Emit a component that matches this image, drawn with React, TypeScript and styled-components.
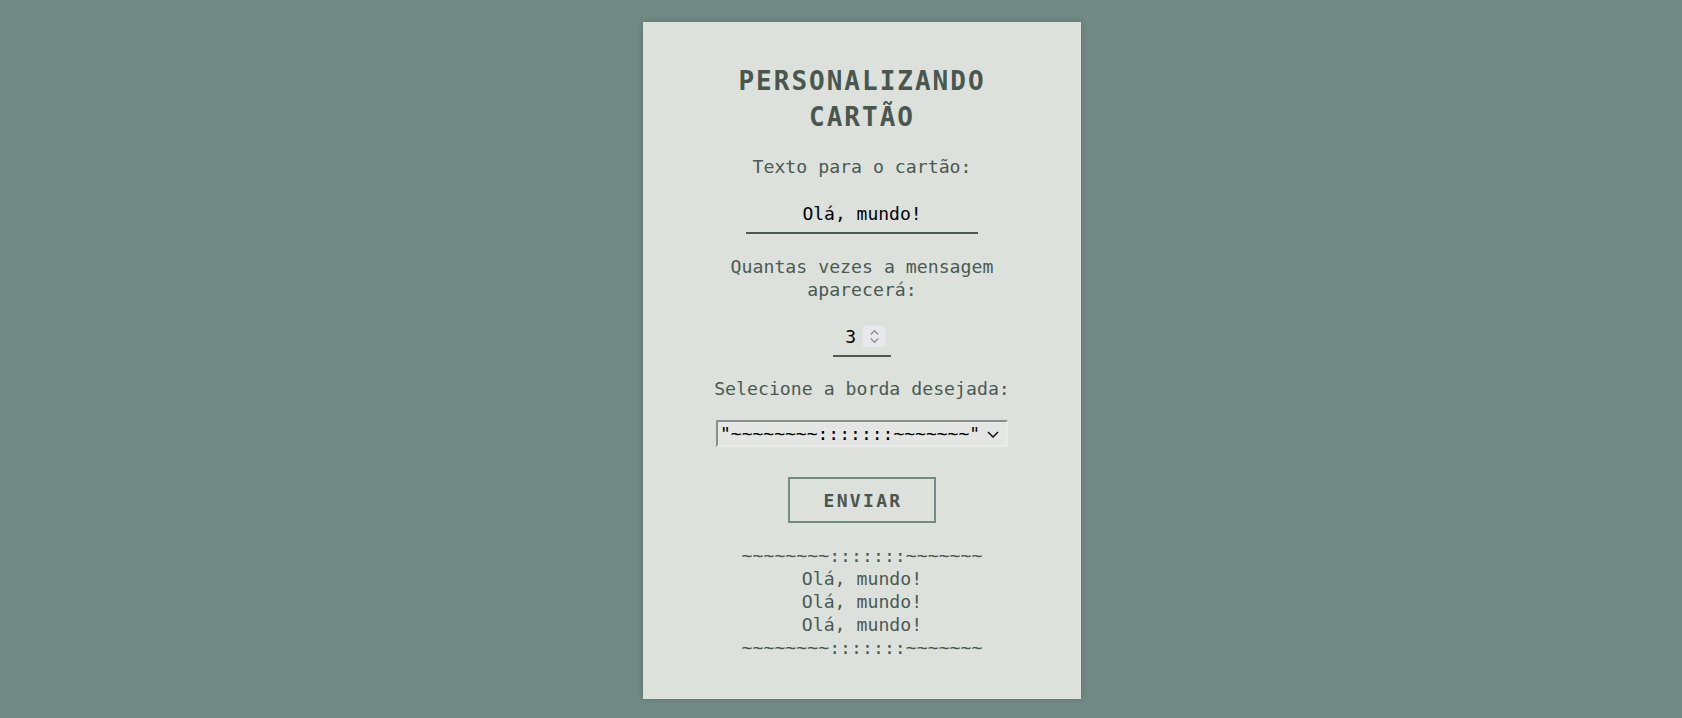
import React, { useState } from "react";
import styled, { createGlobalStyle } from "styled-components";

const GlobalStyle = createGlobalStyle`
  html, body {
    margin: 0;
    padding: 0;
    background: #728a85;
    min-height: 100%;
  }
  body {
    font-family: "DejaVu Sans Mono", "Liberation Mono", monospace;
  }
`;

const TEXT = "#4b5a52";
const MONO = `"DejaVu Sans Mono", "Liberation Mono", monospace`;

const Page = styled.div`
  display: flex;
  justify-content: center;
  align-items: flex-start;
  padding: 22px 0 19px 42px;
  min-height: 718px;
  box-sizing: border-box;
`;

const Card = styled.form`
  width: 438px;
  box-sizing: border-box;
  background: #dce1dc;
  box-shadow: 0 0 8px rgba(0, 0, 0, 0.18);
  padding: 41px 60px 40px;
  display: flex;
  flex-direction: column;
  align-items: center;
  font-family: ${MONO};
  color: ${TEXT};
`;

const Title = styled.h1`
  margin: 0;
  font-size: 26px;
  line-height: 36px;
  font-weight: bold;
  letter-spacing: 2px;
  text-align: center;
  color: #4a574f;
`;

const Label = styled.label<{ $top?: number }>`
  display: block;
  margin-top: ${(p) => p.$top ?? 20}px;
  font-size: 18.2px;
  line-height: 23px;
  text-align: center;
`;

const TextInput = styled.input`
  margin-top: 20px;
  width: 232px;
  height: 36px;
  box-sizing: border-box;
  padding: 4px 0 7px;
  border: none;
  border-bottom: 2px solid #4b5a52;
  background: transparent;
  font-family: ${MONO};
  font-size: 18px;
  line-height: 23px;
  color: #000;
  text-align: center;
  outline: none;
`;

const NumberField = styled.div`
  margin-top: 20px;
  width: 58px;
  height: 36px;
  box-sizing: border-box;
  padding: 4px 6px 7px 0;
  border-bottom: 2px solid #4b5a52;
  display: flex;
  align-items: center;
  gap: 7px;
`;

const NumberInput = styled.input`
  width: 23px;
  height: 23px;
  padding: 0;
  border: none;
  background: transparent;
  font-family: ${MONO};
  font-size: 18px;
  line-height: 23px;
  color: #000;
  text-align: right;
  outline: none;
  -moz-appearance: textfield;
  &::-webkit-inner-spin-button,
  &::-webkit-outer-spin-button {
    -webkit-appearance: none;
    margin: 0;
  }
`;

const Spinner = styled.span`
  width: 23px;
  height: 21px;
  background: #e9e9ed;
  display: flex;
  align-items: center;
  justify-content: center;
`;

const SelectWrap = styled.div`
  position: relative;
  margin-top: 20px;
  width: 292px;
  height: 27px;
`;

const Select = styled.select`
  appearance: none;
  -webkit-appearance: none;
  width: 100%;
  height: 100%;
  box-sizing: border-box;
  padding: 0 0 0 2px;
  border: 2px solid;
  border-color: #8c8c8c #e9ebe8 #e9ebe8 #8c8c8c;
  border-radius: 0;
  background: #e4e6e3;
  font-family: ${MONO};
  font-size: 18px;
  color: #000;
  outline: none;
`;

const Chevron = styled.svg`
  position: absolute;
  right: 9px;
  top: 11px;
  pointer-events: none;
`;

const Button = styled.button`
  margin-top: 30px;
  width: 148px;
  height: 46px;
  box-sizing: border-box;
  border: 2px solid #748b86;
  background: transparent;
  font-family: ${MONO};
  font-size: 18px;
  font-weight: bold;
  letter-spacing: 2.3px;
  color: #4a574f;
  cursor: pointer;
  padding: 0 0 0 2px;
`;

const Output = styled.div`
  margin-top: 21px;
  font-size: 18.2px;
  line-height: 23px;
  text-align: center;
  white-space: pre;
`;

const BORDER = "~~~~~~~~:::::::~~~~~~~";

export default function App() {
  const [text, setText] = useState("Olá, mundo!");
  const [times, setTimes] = useState(3);
  const [border, setBorder] = useState(BORDER);

  const lines = [border, ...Array.from({ length: times }, () => text), border];

  return (
    <>
      <GlobalStyle />
      <Page>
        <Card onSubmit={(e) => e.preventDefault()}>
          <Title>PERSONALIZANDO CARTÃO</Title>
          <Label htmlFor="texto">Texto para o cartão:</Label>
          <TextInput id="texto" value={text} onChange={(e) => setText(e.target.value)} />
          <Label htmlFor="vezes" $top={21}>
            Quantas vezes a mensagem aparecerá:
          </Label>
          <NumberField>
            <NumberInput
              id="vezes"
              type="number"
              value={times}
              onChange={(e) => setTimes(Math.max(0, Number(e.target.value) || 0))}
            />
            <Spinner>
              <svg width="11" height="17" viewBox="0 0 11 17" fill="none" stroke="#8f8f96" strokeWidth="1.4">
                <path d="M1.8 6.5 L5.5 2.8 L9.2 6.5" />
                <path d="M1.8 10.5 L5.5 14.2 L9.2 10.5" />
              </svg>
            </Spinner>
          </NumberField>
          <Label htmlFor="borda">Selecione a borda desejada:</Label>
          <SelectWrap>
            <Select id="borda" value={border} onChange={(e) => setBorder(e.target.value)}>
              <option value={BORDER}>"{BORDER}"</option>
              <option value="********########********">"********########********"</option>
              <option value="-=-=-=-=-=-=-=-=-=-=-=">"-=-=-=-=-=-=-=-=-=-=-="</option>
            </Select>
            <Chevron width="12" height="7" viewBox="0 0 12 7" fill="none" stroke="#111" strokeWidth="1.5">
              <path d="M1 1 L6 6 L11 1" />
            </Chevron>
          </SelectWrap>
          <Button type="submit">ENVIAR</Button>
          <Output>
            {lines.map((l, i) => (
              <div key={i}>{l}</div>
            ))}
          </Output>
        </Card>
      </Page>
    </>
  );
}
